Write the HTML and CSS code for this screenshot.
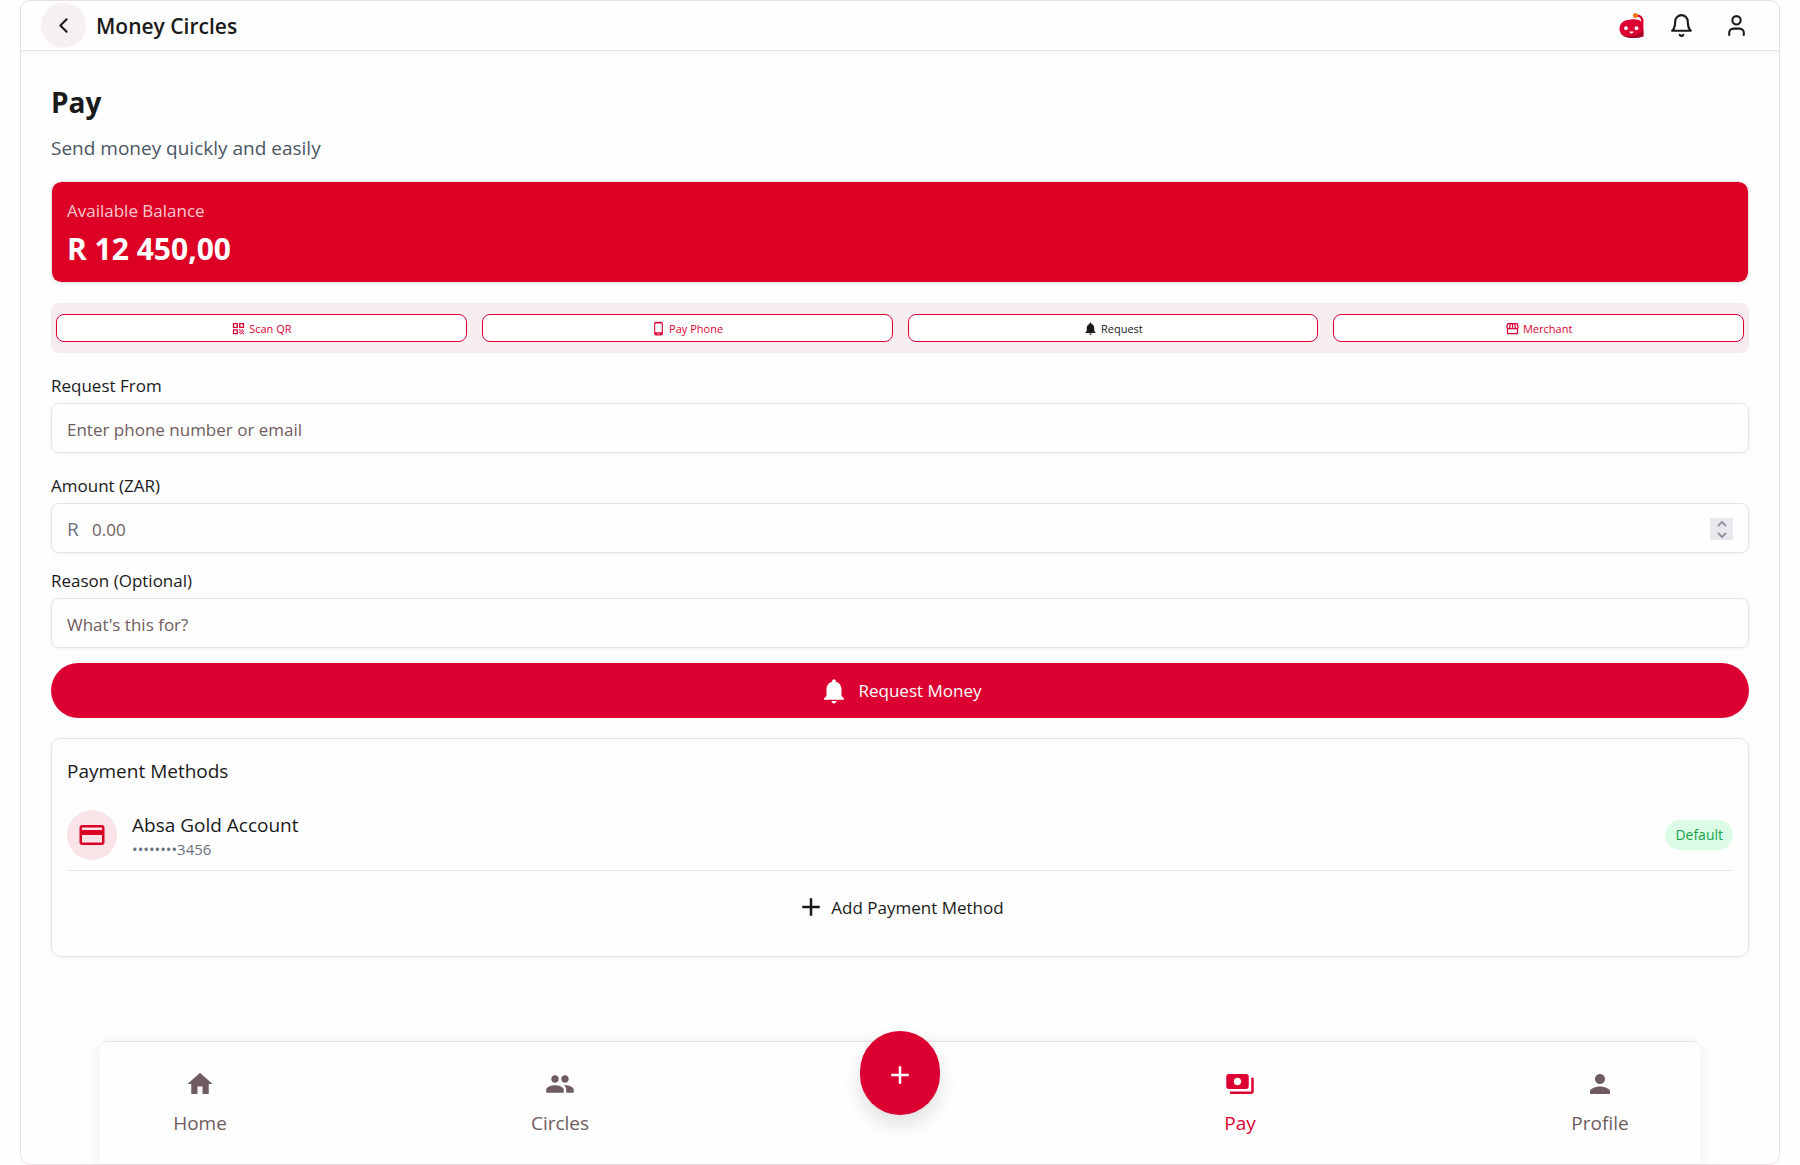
FILE: index.html
```html
<!DOCTYPE html>
<html lang="en">
<head>
<meta charset="utf-8">
<meta name="viewport" content="width=device-width, initial-scale=1">
<title>Money Circles</title>
<link rel="stylesheet" href="styles.css">
</head>
<body>
<div class="app">
  <header class="topbar">
    <button class="back" type="button" aria-label="Back">
      <svg class="icon-md line" viewBox="0 0 24 24"><path d="m15 18-6-6 6-6"/></svg>
    </button>
    <h1 class="brand">Money Circles</h1>
    <div class="actions">
      <button class="action" type="button" aria-label="Assistant">
        <svg class="icon-md" viewBox="0 0 25 25">
          <path d="M18 2.600C21.500 2.600 23.300 4.500 23.300 9" fill="none" stroke="#dc0032" stroke-width="2.200"/>
          <path d="M12.500 6.500C17 6 20.500 7 22 8.500L24.400 6.500V23.200C20 25 16 25 12.500 25C5 25 .5 21.500 .5 15.800C.5 10 5 6.500 12.500 6.500Z" fill="#dc0032"/>
          <path d="M24.400 16.500V23.200C19 25.200 9 26 4.500 22.200C13 24.300 21 22.500 24.400 16.500Z" fill="#a30027"/>
          <circle cx="16.300" cy="2.600" r="2.500" fill="#ff7a1a"/>
          <circle cx="7" cy="15.200" r="1.900" fill="#fff"/>
          <circle cx="17.500" cy="15.200" r="1.900" fill="#fff"/>
          <path d="M10.500 18.500h4a2 2 0 0 1-4 0Z" fill="#fff"/>
        </svg>
      </button>
      <button class="action" type="button" aria-label="Notifications">
        <svg class="icon-md line" viewBox="0 0 24 24"><path d="M6 8a6 6 0 0 1 12 0c0 7 3 9 3 9H3s3-2 3-9"/><path d="M10.300 21a1.940 1.940 0 0 0 3.400 0"/></svg>
      </button>
      <button class="action action-account" type="button" aria-label="Account">
        <svg class="icon-md line" viewBox="0 0 24 24"><path d="M19 21v-2a4 4 0 0 0-4-4H9a4 4 0 0 0-4 4v2"/><circle cx="12" cy="7" r="4"/></svg>
      </button>
    </div>
  </header>

  <main class="content">
    <h2 class="title">Pay</h2>
    <p class="subtitle">Send money quickly and easily</p>

    <section class="balance">
      <p class="balance-label">Available Balance</p>
      <p class="balance-value">R 12 450,00</p>
    </section>

    <div class="tabs">
      <button class="tab" type="button">
        <svg class="icon-sm" viewBox="0 0 24 24"><path d="M3 11h8V3H3v8zm2-6h4v4H5V5zM3 21h8v-8H3v8zm2-6h4v4H5v-4zM13 3v8h8V3h-8zm6 6h-4V5h4v4zM19 19h2v2h-2zM13 13h2v2h-2zM15 15h2v2h-2zM13 17h2v2h-2zM15 19h2v2h-2zM17 17h2v2h-2zM17 13h2v2h-2zM19 15h2v2h-2z"/></svg>
        Scan QR
      </button>
      <button class="tab" type="button">
        <svg class="icon-sm" viewBox="0 0 24 24"><path d="M16 1H8C6.340 1 5 2.340 5 4v16c0 1.660 1.340 3 3 3h8c1.660 0 3-1.340 3-3V4c0-1.660-1.340-3-3-3zm-2 20h-4v-1h4v1zm3.250-3H6.750V4h10.500v14z"/></svg>
        Pay Phone
      </button>
      <button class="tab tab-active" type="button">
        <svg class="icon-sm" viewBox="0 0 24 24"><path d="M12 22c1.100 0 2-.9 2-2h-4c0 1.100.89 2 2 2zm6-6v-5c0-3.070-1.640-5.640-4.500-6.320V4c0-.83-.67-1.500-1.500-1.500s-1.500.67-1.500 1.500v.68C7.630 5.360 6 7.920 6 11v5l-2 2v1h16v-1l-2-2z"/></svg>
        Request
      </button>
      <button class="tab" type="button">
        <svg class="icon-sm line" viewBox="0 0 24 24"><path d="M4 11v9h16v-9M4.500 4h15L21 9.500a1.500 1.500 0 0 1-4.500 1 2.200 2.200 0 0 1-4.500 0 2.200 2.200 0 0 1-4.500 0A1.500 1.500 0 0 1 3 9.500ZM8.500 4l-1 6M12 4v6M15.500 4l1 6"/></svg>
        Merchant
      </button>
    </div>

    <form class="form">
      <div class="field field-wide">
        <label class="label" for="from">Request From</label>
        <input class="input" id="from" type="text" placeholder="Enter phone number or email">
      </div>
      <div class="field">
        <label class="label" for="amount">Amount (ZAR)</label>
        <div class="money">
          <span class="currency">R</span>
          <input class="money-input" id="amount" type="number" placeholder="0.00">
          <span class="stepper">
            <button class="step" type="button" aria-label="Increase"><svg class="step-icon" viewBox="0 0 10 6"><path d="m1 5 4-4 4 4"/></svg></button>
            <button class="step" type="button" aria-label="Decrease"><svg class="step-icon" viewBox="0 0 10 6"><path d="m1 1 4 4 4-4"/></svg></button>
          </span>
        </div>
      </div>
      <div class="field">
        <label class="label" for="reason">Reason (Optional)</label>
        <input class="input" id="reason" type="text" placeholder="What's this for?">
      </div>
      <button class="submit" type="button">
        <svg class="icon-lg" viewBox="0 0 24 24"><path d="M12 22c1.100 0 2-.9 2-2h-4c0 1.100.89 2 2 2zm6-6v-5c0-3.070-1.640-5.640-4.500-6.320V4c0-.83-.67-1.500-1.500-1.500s-1.500.67-1.500 1.500v.68C7.630 5.360 6 7.920 6 11v5l-2 2v1h16v-1l-2-2z"/></svg>
        Request Money
      </button>
    </form>

    <section class="methods">
      <h3 class="methods-title">Payment Methods</h3>
      <div class="method">
        <span class="method-icon">
          <svg class="icon-lg" viewBox="0 0 24 24"><path d="M20 4H4c-1.110 0-1.990.89-1.990 2L2 18c0 1.110.89 2 2 2h16c1.110 0 2-.89 2-2V6c0-1.110-.89-2-2-2zm0 14H4v-6h16v6zm0-10H4V6h16v2z"/></svg>
        </span>
        <div class="method-text">
          <p class="method-name">Absa Gold Account</p>
          <p class="method-number">••••••••3456</p>
        </div>
        <span class="badge">Default</span>
      </div>
      <button class="add" type="button">
        <svg class="icon-lg" viewBox="0 0 24 24"><path d="M19 13h-6v6h-2v-6H5v-2h6V5h2v6h6v2z"/></svg>
        Add Payment Method
      </button>
    </section>
  </main>

  <nav class="nav">
    <a class="nav-item" href="#home">
      <svg class="icon-lg" viewBox="0 0 24 24"><path d="M10 20v-6h4v6h5v-8h3L12 3 2 12h3v8z"/></svg>
      Home
    </a>
    <a class="nav-item" href="#circles">
      <svg class="icon-lg" viewBox="0 0 24 24"><path d="M16 11c1.660 0 2.990-1.340 2.990-3S17.660 5 16 5c-1.660 0-3 1.340-3 3s1.340 3 3 3zm-8 0c1.660 0 2.990-1.340 2.990-3S9.660 5 8 5C6.340 5 5 6.340 5 8s1.340 3 3 3zm0 2c-2.330 0-7 1.170-7 3.500V19h14v-2.500c0-2.330-4.670-3.500-7-3.500zm8 0c-.29 0-.62.020-.97.050 1.160.84 1.970 1.970 1.970 3.450V19h6v-2.500c0-2.330-4.670-3.500-7-3.500z"/></svg>
      Circles
    </a>
    <button class="fab" type="button" aria-label="New">
      <svg class="icon-lg" viewBox="0 0 24 24"><path d="M19 13h-6v6h-2v-6H5v-2h6V5h2v6h6v2z"/></svg>
    </button>
    <a class="nav-item nav-active" href="#pay">
      <svg class="icon-lg" viewBox="0 0 24 24"><path d="M19 14V6c0-1.100-.9-2-2-2H3c-1.100 0-2 .9-2 2v8c0 1.100.9 2 2 2h14c1.100 0 2-.9 2-2zm-9-1c-1.660 0-3-1.340-3-3s1.340-3 3-3 3 1.340 3 3-1.340 3-3 3zm13-6v11c0 1.100-.9 2-2 2H4v-2h17V7h2z"/></svg>
      Pay
    </a>
    <a class="nav-item" href="#profile">
      <svg class="icon-lg" viewBox="0 0 24 24"><path d="M12 12c2.210 0 4-1.790 4-4s-1.790-4-4-4-4 1.790-4 4 1.790 4 4 4zm0 2c-2.670 0-8 1.340-8 4v2h16v-2c0-2.660-5.330-4-8-4z"/></svg>
      Profile
    </a>
  </nav>
</div>
</body>
</html>
```
FILE: styles.css
```css
:root {
  --red: #dc0032;
  --line: #efe0e4;
  --ink: #1a1a1a;
  --muted: #705c60;
  --gray: #6b7280;
  --page: #fefefe;
  --shadow: 0 1px 4px rgba(0, 0, 0, 0.06);
}

* {
  box-sizing: border-box;
}

body,
h1,
h2,
h3,
p {
  margin: 0;
}

body {
  background: var(--page);
  color: var(--ink);
  font: 400 17px/25px "Open Sans", "Noto Sans", sans-serif;
}

button,
input {
  padding: 0;
  border: 0;
  background: none;
  color: inherit;
  font: inherit;
}

button {
  cursor: pointer;
}

svg {
  display: block;
  flex: none;
  fill: currentColor;
}

.line {
  fill: none;
  stroke: currentColor;
  stroke-width: 2;
  stroke-linecap: round;
  stroke-linejoin: round;
}

.icon-sm {
  width: 15px;
  height: 15px;
}

.icon-md {
  width: 25px;
  height: 25px;
}

.icon-lg {
  width: 30px;
  height: 30px;
}

.app {
  display: flex;
  flex-direction: column;
  min-height: 100vh;
  margin: 0 20px;
  border: 1px solid var(--line);
  border-radius: 10px;
}

.topbar {
  display: flex;
  align-items: center;
  height: 50px;
  padding: 0 30px 0 20px;
  border-bottom: 1px solid var(--line);
  box-shadow: 0 1px 4px rgba(0, 0, 0, 0.04);
}

.back {
  display: grid;
  place-items: center;
  width: 45px;
  height: 45px;
  border-radius: 50%;
  background: #f7f0f2;
}

.brand {
  margin-left: 10px;
  font-size: 21px;
  font-weight: 600;
  line-height: 30px;
}

.actions {
  display: flex;
  gap: 25px;
  margin-left: auto;
}

.action-account {
  padding-left: 5px;
}

.content {
  flex: 1;
  padding: 30px;
}

.title {
  font-size: 28px;
  font-weight: 700;
  line-height: 42px;
}

.subtitle {
  margin-top: 10px;
  color: #4b5563;
  font-size: 19px;
  line-height: 30px;
}

.balance {
  margin-top: 18px;
  padding: 16px 15px 15px;
  border: 1px solid var(--line);
  border-radius: 10px;
  background: #dc0024;
  background-clip: padding-box;
  box-shadow: var(--shadow);
  color: #fff;
}

.balance-label {
  color: #fbc9d2;
}

.balance-value {
  margin-top: 8px;
  font-size: 30px;
  font-weight: 700;
  line-height: 36px;
}

.tabs {
  display: grid;
  grid-template-columns: repeat(4, 1fr);
  gap: 15px;
  margin-top: 20px;
  padding: 11px 5px;
  border-radius: 8px;
  background: #f7ecf0;
}

.tab {
  display: flex;
  align-items: center;
  justify-content: center;
  gap: 3px;
  height: 28px;
  border: 1px solid var(--red);
  border-radius: 8px;
  background: #fff;
  color: var(--red);
  font-size: 11px;
}

.tab-active {
  color: var(--ink);
}

.form {
  display: flex;
  flex-direction: column;
  gap: 15px;
  margin-top: 20px;
}

.field {
  display: flex;
  flex-direction: column;
  gap: 4px;
}

.field-wide {
  margin-bottom: 5px;
}

.label {
  align-self: flex-start;
  line-height: 26px;
}

.input,
.money {
  width: 100%;
  height: 50px;
  padding: 2px 15px 0;
  border: 1px solid var(--line);
  border-radius: 8px;
  box-shadow: var(--shadow);
}

.input::placeholder,
.money-input::placeholder {
  color: var(--muted);
  opacity: 1;
}

.money {
  display: flex;
  align-items: center;
}

.currency {
  width: 25px;
  color: var(--gray);
  font-size: 19px;
}

.money-input {
  flex: 1;
  min-width: 0;
  appearance: textfield;
}

.money-input::-webkit-inner-spin-button {
  appearance: none;
}

.stepper {
  display: flex;
  flex-direction: column;
  width: 23px;
  height: 22px;
  background: #e8e8ed;
}

.step {
  display: grid;
  flex: 1;
  place-items: center;
}

.step-icon {
  width: 10px;
  height: 6px;
  fill: none;
  stroke: #9494a3;
  stroke-width: 2;
}

.submit {
  display: flex;
  align-items: center;
  justify-content: center;
  gap: 10px;
  height: 55px;
  border-radius: 28px;
  background: var(--red);
  color: #fff;
}

.methods {
  margin-top: 20px;
  padding: 16px 15px 24px;
  border: 1px solid var(--line);
  border-radius: 10px;
  box-shadow: var(--shadow);
}

.methods-title {
  font-size: 19px;
  font-weight: 400;
  line-height: 32px;
}

.method {
  display: flex;
  align-items: center;
  gap: 15px;
  margin-top: 12px;
  padding: 10px 0;
  border-bottom: 1px solid var(--line);
}

.method-icon {
  display: grid;
  place-items: center;
  width: 50px;
  height: 50px;
  border-radius: 50%;
  background: #fbe4e8;
  color: #dc0024;
}

.method-text {
  padding-top: 4px;
}

.method-name {
  font-size: 19px;
}

.method-number {
  color: var(--gray);
  font-size: 15px;
  line-height: 22px;
}

.badge {
  margin-left: auto;
  padding: 0 10px;
  border-radius: 15px;
  background: #dcfce7;
  color: #16a34a;
  font-size: 14px;
  line-height: 30px;
}

.add {
  display: flex;
  align-items: center;
  justify-content: center;
  gap: 5px;
  width: 100%;
  height: 50px;
  margin-top: 11px;
}

.nav {
  display: flex;
  justify-content: space-between;
  height: 123px;
  margin: 0 79px;
  padding: 0 40px;
  border-top: 1px solid var(--line);
  border-radius: 8px 8px 0 0;
  background: var(--page);
  box-shadow: 0 4px 20px rgba(0, 0, 0, 0.08);
}

.nav-item {
  display: flex;
  flex-direction: column;
  align-items: center;
  gap: 9px;
  width: 120px;
  padding-top: 27px;
  color: var(--muted);
  font-size: 19px;
  line-height: 30px;
  text-decoration: none;
}

.nav-active {
  color: var(--red);
}

.fab {
  display: grid;
  place-items: center;
  width: 80px;
  height: 84px;
  margin-top: -11px;
  padding-top: 4px;
  border-radius: 40px;
  background: var(--red);
  box-shadow: 0 10px 20px rgba(0, 0, 0, 0.12);
  color: #fff;
}
```
